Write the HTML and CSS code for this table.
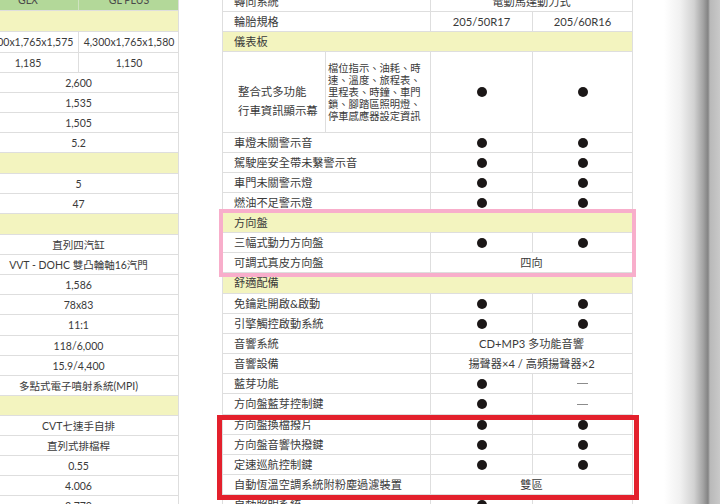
FILE: index.html
```html
<!DOCTYPE html>
<html lang="zh-Hant">
<head>
<meta charset="utf-8">
<title>規格表</title>
<link rel="stylesheet" href="styles.css">
</head>
<body>
<div class="page">
  <section class="left-wrap">
    <div class="sheet sheet-left">
      <div class="row head h21"><div class="c">GLX</div><div class="c">GL PLUS</div></div>
      <div class="row band h21"></div>
      <div class="row h21"><div class="c">4,300x1,765x1,575</div><div class="c">4,300x1,765x1,580</div></div>
      <div class="row"><div class="c">1,185</div><div class="c">1,150</div></div>
      <div class="row"><div class="c span">2,600</div></div>
      <div class="row"><div class="c span">1,535</div></div>
      <div class="row"><div class="c span">1,505</div></div>
      <div class="row"><div class="c span">5.2</div></div>
      <div class="row band h21"></div>
      <div class="row"><div class="c span">5</div></div>
      <div class="row"><div class="c span">47</div></div>
      <div class="row band h21"></div>
      <div class="row"><div class="c span">直列四汽缸</div></div>
      <div class="row"><div class="c span">VVT - DOHC 雙凸輪軸16汽門</div></div>
      <div class="row"><div class="c span">1,586</div></div>
      <div class="row"><div class="c span">78x83</div></div>
      <div class="row h21"><div class="c span">11:1</div></div>
      <div class="row"><div class="c span">118/6,000</div></div>
      <div class="row"><div class="c span">15.9/4,400</div></div>
      <div class="row"><div class="c span">多點式電子噴射系統(MPI)</div></div>
      <div class="row band"></div>
      <div class="row"><div class="c span">CVT七速手自排</div></div>
      <div class="row"><div class="c span">直列式排檔桿</div></div>
      <div class="row"><div class="c span">0.55</div></div>
      <div class="row"><div class="c span">4.006</div></div>
      <div class="row"><div class="c span">3.770</div></div>
    </div>
  </section>

  <section class="right-wrap">
    <div class="sheet sheet-right">
      <div class="row"><div class="l">轉向系統</div><div class="c span">電動馬達動力式</div></div>
      <div class="row"><div class="l">輪胎規格</div><div class="c">205/50R17</div><div class="c">205/60R16</div></div>
      <div class="row band"><div class="l">儀表板</div></div>
      <div class="row tall">
        <div class="l sub">整合式多功能<br>行車資訊顯示幕</div>
        <div class="l note">檔位指示、油耗、時<br>速、溫度、旅程表、<br>里程表、時鐘、車門<br>鎖、腳踏區照明燈、<br>停車感應器設定資訊</div>
        <div class="c"><i class="dot"></i></div><div class="c"><i class="dot"></i></div>
      </div>
      <div class="row"><div class="l">車燈未關警示音</div><div class="c"><i class="dot"></i></div><div class="c"><i class="dot"></i></div></div>
      <div class="row"><div class="l">駕駛座安全帶未繫警示音</div><div class="c"><i class="dot"></i></div><div class="c"><i class="dot"></i></div></div>
      <div class="row"><div class="l">車門未關警示燈</div><div class="c"><i class="dot"></i></div><div class="c"><i class="dot"></i></div></div>
      <div class="row"><div class="l">燃油不足警示燈</div><div class="c"><i class="dot"></i></div><div class="c"><i class="dot"></i></div></div>
      <div class="row band"><div class="l">方向盤</div></div>
      <div class="row"><div class="l">三幅式動力方向盤</div><div class="c"><i class="dot"></i></div><div class="c"><i class="dot"></i></div></div>
      <div class="row"><div class="l">可調式真皮方向盤</div><div class="c span">四向</div></div>
      <div class="row band h21"><div class="l">舒適配備</div></div>
      <div class="row"><div class="l">免鑰匙開啟&amp;啟動</div><div class="c"><i class="dot"></i></div><div class="c"><i class="dot"></i></div></div>
      <div class="row"><div class="l">引擎觸控啟動系統</div><div class="c"><i class="dot"></i></div><div class="c"><i class="dot"></i></div></div>
      <div class="row"><div class="l">音響系統</div><div class="c span">CD+MP3 多功能音響</div></div>
      <div class="row"><div class="l">音響設備</div><div class="c span">揚聲器×4 / 高頻揚聲器×2</div></div>
      <div class="row"><div class="l">藍芽功能</div><div class="c"><i class="dot"></i></div><div class="c"><i class="dash"></i></div></div>
      <div class="row h21"><div class="l">方向盤藍芽控制鍵</div><div class="c"><i class="dot"></i></div><div class="c"><i class="dash"></i></div></div>
      <div class="row"><div class="l">方向盤換檔撥片</div><div class="c"><i class="dot"></i></div><div class="c"><i class="dot"></i></div></div>
      <div class="row"><div class="l">方向盤音響快撥鍵</div><div class="c"><i class="dot"></i></div><div class="c"><i class="dot"></i></div></div>
      <div class="row"><div class="l">定速巡航控制鍵</div><div class="c"><i class="dot"></i></div><div class="c"><i class="dot"></i></div></div>
      <div class="row"><div class="l">自動恆溫空調系統附粉塵過濾裝置</div><div class="c span">雙區</div></div>
      <div class="row"><div class="l">自動照明系統</div><div class="c"><i class="dot"></i></div><div class="c"></div></div>
    </div>
  </section>

  <div class="mark mark-pink"></div>
  <div class="mark mark-red"></div>
</div>
</body>
</html>
```

FILE: styles.css
```css
* { box-sizing: border-box; }

html, body {
  margin: 0;
  padding: 0;
  background: #fff;
}

.page {
  position: relative;
  width: 720px;
  height: 504px;
  overflow: hidden;
  display: flex;
  align-items: flex-start;
  font-family: Lato, "Noto Sans CJK TC", sans-serif;
  color: #3a3a3a;
  background: linear-gradient(to right,
    #ffffff 0, #ffffff 664px, #f1f1f1 680px, #d2d2d2 694px,
    #a4a4a4 703px, #838383 708px, #b9b9b9 710px, #c9c9c9 720px);
}

.left-wrap {
  flex: none;
  width: 179px;
  overflow: hidden;
}

.right-wrap {
  flex: none;
  margin-left: 43px;
}

.sheet {
  background: #fff;
}

.sheet-left {
  width: 201px;
  margin-left: -22px;
  margin-top: -10px;
  font-size: 10.5px;
}

.sheet-right {
  width: 411px;
  margin-top: -8px;
  border-left: 1px solid #dedede;
  font-size: 11.2px;
}

.row {
  display: grid;
  height: 20px;
  border-bottom: 1px solid #dedede;
}

.row.h21 { height: 21px; }

.sheet-left .row { grid-template-columns: 101px 100px; }
.sheet-right .row { grid-template-columns: 208px 102px 100px; }
.sheet-right .row.tall {
  height: 81px;
  grid-template-columns: 103px 105px 102px 100px;
}

.band { background: #f3f4bf; }
.head { background: #b3d899; }

.c, .l {
  display: flex;
  align-items: center;
  border-right: 1px solid #dedede;
  line-height: 14px;
  white-space: nowrap;
  min-width: 0;
}

.c { justify-content: center; }
.c.span { grid-column: 1 / -1; }
.sheet-right .c.span { grid-column: 2 / 4; }

.l {
  padding-left: 11px;
  color: #3a3a3a;
}

.band .l { border-right: none; grid-column: 1 / -1; }
.sheet-right .band { border-right: 1px solid #dedede; }
.sheet-left .band, .sheet-left .row { border-right: 1px solid #dedede; }
.sheet-left .c:last-child { border-right: none; }

.l.sub {
  padding-left: 15px;
  padding-top: 17px;
  font-size: 11.4px;
  line-height: 19px;
}

.l.note {
  padding-left: 2px;
  font-size: 10.3px;
  line-height: 12px;
  letter-spacing: 0;
}

.head .c {
  color: #4a4a4a;
  border-right: 1px solid #cfe3bf;
}

.dot {
  display: block;
  width: 10px;
  height: 10px;
  border-radius: 50%;
  background: #1b1717;
}

.dash {
  display: block;
  width: 11px;
  height: 1px;
  background: #8c8c8c;
}

.mark {
  position: absolute;
  pointer-events: none;
}

.mark-pink {
  left: 219px;
  top: 209px;
  width: 417px;
  height: 68px;
  border: 4px solid #f8aecb;
}

.mark-red {
  left: 217px;
  top: 415px;
  width: 422px;
  height: 85px;
  border: 5px solid #e3202c;
}
```
